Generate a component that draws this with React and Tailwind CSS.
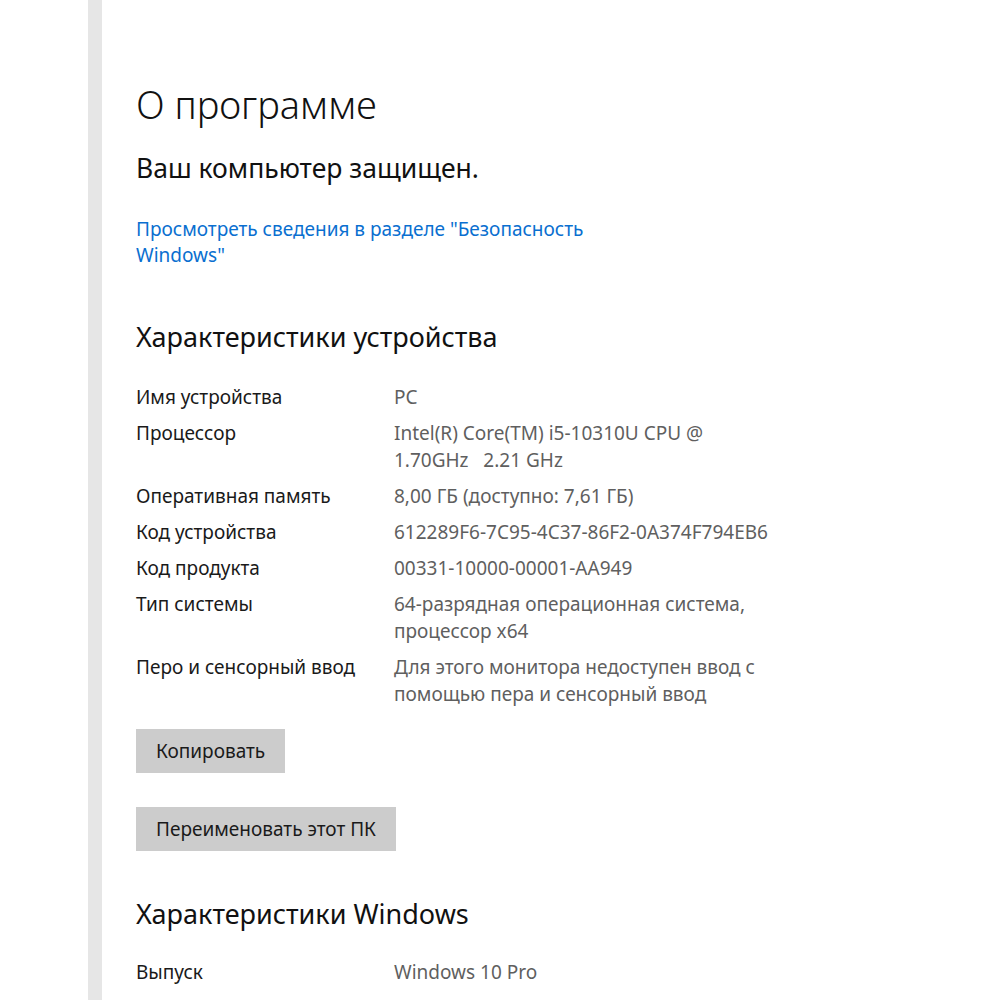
import React from 'react';

const specs = [
    { label: 'Имя устройства', value: ['PC'] },
    { label: 'Процессор', value: ['Intel(R) Core(TM) i5-10310U CPU @', '1.70GHz   2.21 GHz'] },
    { label: 'Оперативная память', value: ['8,00 ГБ (доступно: 7,61 ГБ)'] },
    { label: 'Код устройства', value: ['612289F6-7C95-4C37-86F2-0A374F794EB6'] },
    { label: 'Код продукта', value: ['00331-10000-00001-AA949'] },
    { label: 'Тип системы', value: ['64-разрядная операционная система,', 'процессор x64'] },
    { label: 'Перо и сенсорный ввод', value: ['Для этого монитора недоступен ввод с', 'помощью пера и сенсорный ввод'] },
];

function SpecRow({ label, value }) {
    return (
        <div className="flex text-[19px] leading-[27px]">
            <div className="w-[258px] shrink-0 text-[#1a1a1a]">{label}</div>
            <div className="text-[#5f5f5f] whitespace-pre">
                {value.map((line, i) => <div key={i}>{line}</div>)}
            </div>
        </div>
    );
}

export default function App() {
    return (
        <div className="min-h-screen bg-white flex" style={{ fontFamily: '"Noto Sans", "Open Sans", sans-serif' }}>
            {/* левое поле и серая полоса навигации */}
            <div className="w-[88px] shrink-0 bg-white" />
            <div className="w-[14px] shrink-0 bg-[#e6e6e6]" />

            <div className="pl-[34px] pt-[78px] flex-1">
                <h1 className="text-[38px] leading-[52px] font-light text-[#111]">О программе</h1>
                <div className="mt-[22px] text-[26.5px] leading-[32px] text-[#111]">Ваш компьютер защищен.</div>

                <a className="block mt-[32px] text-[19px] leading-[26px] text-[#0a6fd0] w-[470px]">
                    Просмотреть сведения в разделе "Безопасность Windows"
                </a>

                <h2 className="mt-[51px] text-[27px] leading-[36px] text-[#111]">Характеристики устройства</h2>

                <div className="mt-[29px] flex flex-col gap-[9px]">
                    {specs.map((s) => <SpecRow key={s.label} {...s} />)}
                </div>

                <div className="mt-[21px] flex flex-col gap-[34px] items-start">
                    <button className="h-[44px] px-[20px] bg-[#cccccc] text-[19px] text-[#1a1a1a]">Копировать</button>
                    <button className="h-[44px] px-[20px] bg-[#cccccc] text-[19px] text-[#1a1a1a]">Переименовать этот ПК</button>
                </div>

                <h2 className="mt-[45px] text-[27px] leading-[36px] text-[#111]">Характеристики Windows</h2>

                <div className="mt-[27px]">
                    <SpecRow label="Выпуск" value={['Windows 10 Pro']} />
                </div>
            </div>
        </div>
    );
}
